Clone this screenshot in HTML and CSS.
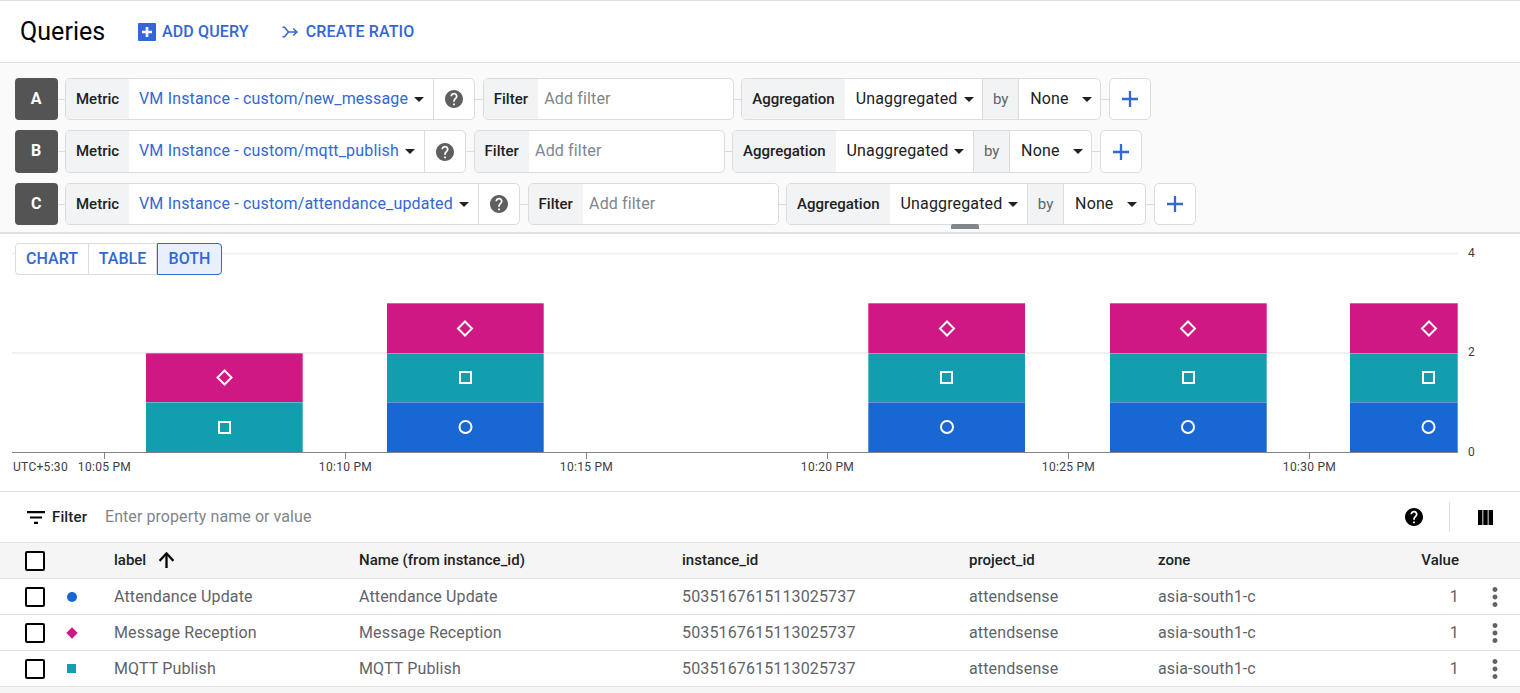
FILE: index.html
```html
<!DOCTYPE html>
<html lang="en">
<head>
<meta charset="utf-8">
<title>Queries</title>
<link rel="stylesheet" href="styles.css">
</head>
<body>
<svg class="defs" width="0" height="0" aria-hidden="true">
  <symbol id="help" viewBox="2 2 20 20"><path d="M12 2C6.48 2 2 6.48 2 12s4.48 10 10 10 10-4.48 10-10S17.52 2 12 2zm1 17h-2v-2h2v2zm2.07-7.75l-.9.92C13.45 12.9 13 13.5 13 15h-2v-.5c0-1.1.45-2.1 1.17-2.83l1.24-1.26c.37-.36.59-.86.59-1.41 0-1.1-.9-2-2-2s-2 .9-2 2H8c0-2.21 1.79-4 4-4s4 1.79 4 4c0 .88-.36 1.68-.93 2.25z"/></symbol>
  <symbol id="plus" viewBox="0 0 18 18"><path d="M7.700 0h2.600v7.700H18v2.600h-7.700V18H7.700v-7.700H0V7.700h7.700z"/></symbol>
  <symbol id="more" viewBox="0 0 24 24"><path d="M12 8c1.1 0 2-.9 2-2s-.9-2-2-2-2 .9-2 2 .9 2 2 2zm0 2c-1.1 0-2 .9-2 2s.9 2 2 2 2-.9 2-2-.9-2-2-2zm0 6c-1.1 0-2 .9-2 2s.9 2 2 2 2-.9 2-2-.9-2-2-2z"/></symbol>
</svg>

<header class="head">
  <h1 class="title">Queries</h1>
  <a class="action action-add"><svg class="ico-add" viewBox="0 0 18 18"><rect width="18" height="18" rx="1" fill="#3367d6"/><path d="M7.700 4h2.600v3.700H14v2.600h-3.700V14H7.700v-3.700H4V7.700h3.700z" fill="#fff"/></svg>ADD QUERY</a>
  <a class="action action-ratio"><svg class="ico-ratio" viewBox="0 0 16 12"><path d="M0.500 1.200H2.500L6.500 6H15M0.500 10.800H2.500L6.500 6M11.200 2.500L15 6L11.200 9.500" fill="none" stroke="#3367d6" stroke-width="1.500"/></svg>CREATE RATIO</a>
</header>

<section class="queries">
  <div class="qrow">
    <div class="letter">A</div><i class="link"></i>
    <div class="pill">
      <span class="plabel plabel-metric">Metric</span>
      <span class="pvalue pvalue-blue">VM Instance - custom/new_message<b class="caret"></b></span>
      <span class="phelp"><svg class="ico-help"><use href="#help"/></svg></span>
    </div><i class="link"></i>
    <div class="pill pill-filter"><span class="plabel plabel-filter">Filter</span><span class="placeholder">Add filter</span></div><i class="link"></i>
    <div class="pill">
      <span class="plabel plabel-agg">Aggregation</span>
      <span class="pvalue pvalue-agg">Unaggregated<b class="caret"></b></span>
      <span class="plabel plabel-by">by</span>
      <span class="pvalue pvalue-none">None<b class="caret"></b></span>
    </div><i class="link"></i>
    <div class="pill pill-plus"><svg class="ico-plus"><use href="#plus"/></svg></div>
  </div>
  <div class="qrow">
    <div class="letter">B</div><i class="link"></i>
    <div class="pill">
      <span class="plabel plabel-metric">Metric</span>
      <span class="pvalue pvalue-blue">VM Instance - custom/mqtt_publish<b class="caret"></b></span>
      <span class="phelp"><svg class="ico-help"><use href="#help"/></svg></span>
    </div><i class="link"></i>
    <div class="pill pill-filter"><span class="plabel plabel-filter">Filter</span><span class="placeholder">Add filter</span></div><i class="link"></i>
    <div class="pill">
      <span class="plabel plabel-agg">Aggregation</span>
      <span class="pvalue pvalue-agg">Unaggregated<b class="caret"></b></span>
      <span class="plabel plabel-by">by</span>
      <span class="pvalue pvalue-none">None<b class="caret"></b></span>
    </div><i class="link"></i>
    <div class="pill pill-plus"><svg class="ico-plus"><use href="#plus"/></svg></div>
  </div>
  <div class="qrow">
    <div class="letter">C</div><i class="link"></i>
    <div class="pill">
      <span class="plabel plabel-metric">Metric</span>
      <span class="pvalue pvalue-blue">VM Instance - custom/attendance_updated<b class="caret"></b></span>
      <span class="phelp"><svg class="ico-help"><use href="#help"/></svg></span>
    </div><i class="link"></i>
    <div class="pill pill-filter"><span class="plabel plabel-filter">Filter</span><span class="placeholder">Add filter</span></div><i class="link"></i>
    <div class="pill">
      <span class="plabel plabel-agg">Aggregation</span>
      <span class="pvalue pvalue-agg">Unaggregated<b class="caret"></b></span>
      <span class="plabel plabel-by">by</span>
      <span class="pvalue pvalue-none">None<b class="caret"></b></span>
    </div><i class="link"></i>
    <div class="pill pill-plus"><svg class="ico-plus"><use href="#plus"/></svg></div>
  </div>
  <div class="handle"></div>
</section>

<section class="chart">
  <svg class="plot" width="1520" height="257" viewBox="0 234 1520 257">
    <path class="grid" d="M12 253.500H1458M12 353H1458"/>
    <g class="bars">
      <rect class="b-pink" x="146" y="353" width="157" height="49"/><rect class="b-teal" x="146" y="402" width="157" height="50"/>
      <rect class="b-pink" x="387" y="303" width="157" height="50"/><rect class="b-teal" x="387" y="353" width="157" height="49"/><rect class="b-blue" x="387" y="402" width="157" height="50"/>
      <rect class="b-pink" x="868" y="303" width="157" height="50"/><rect class="b-teal" x="868" y="353" width="157" height="49"/><rect class="b-blue" x="868" y="402" width="157" height="50"/>
      <rect class="b-pink" x="1110" y="303" width="157" height="50"/><rect class="b-teal" x="1110" y="353" width="157" height="49"/><rect class="b-blue" x="1110" y="402" width="157" height="50"/>
      <rect class="b-pink" x="1350" y="303" width="108" height="50"/><rect class="b-teal" x="1350" y="353" width="108" height="49"/><rect class="b-blue" x="1350" y="402" width="108" height="50"/>
    </g>
    <path class="edges" d="M146 353.500H303M302.500 353V452M387 303.500H544M543.500 303V452M868 303.500H1025M868.500 303V452M1110 303.500H1267M1266.500 303V452M1350 303.500H1458M1457.500 303V452M146 402.500H303M387 353.500H544M387 402.500H544M868 353.500H1025M868 402.500H1025M1110 353.500H1267M1110 402.500H1267M1350 353.500H1458M1350 402.500H1458"/>
    <g class="marks">
      <path d="M224.500 370.500l7 7-7 7-7-7z"/><rect x="219" y="422" width="11" height="11"/>
      <path d="M465 321.500l7 7-7 7-7-7z"/><rect x="460" y="372" width="11" height="11"/><circle cx="465.500" cy="427" r="6"/>
      <path d="M947 321.500l7 7-7 7-7-7z"/><rect x="941" y="372" width="11" height="11"/><circle cx="947" cy="427" r="6"/>
      <path d="M1188 321.500l7 7-7 7-7-7z"/><rect x="1183" y="372" width="11" height="11"/><circle cx="1188" cy="427" r="6"/>
      <path d="M1429 321.500l7 7-7 7-7-7z"/><rect x="1423" y="372" width="11" height="11"/><circle cx="1428.500" cy="427" r="6"/>
    </g>
    <path class="axis" d="M12 452.500H1458M104.500 453v6M345.500 453v6M586.500 453v6M827.500 453v6M1068.500 453v6M1309.500 453v6"/>
    <g class="xlabels">
      <text x="13" y="471">UTC+5:30</text>
      <text class="mid" x="104.500" y="471">10:05 PM</text>
      <text class="mid" x="345.500" y="471">10:10 PM</text>
      <text class="mid" x="586.500" y="471">10:15 PM</text>
      <text class="mid" x="827.500" y="471">10:20 PM</text>
      <text class="mid" x="1068.500" y="471">10:25 PM</text>
      <text class="mid" x="1309.500" y="471">10:30 PM</text>
    </g>
    <g class="ylabels">
      <text x="1468" y="257">4</text>
      <text x="1468" y="356">2</text>
      <text x="1468" y="456">0</text>
    </g>
  </svg>
  <div class="toggle">
    <span class="tog tog-chart">CHART</span><span class="tog tog-table">TABLE</span><span class="tog tog-both">BOTH</span>
  </div>
</section>

<section class="filterbar">
  <svg class="ico-filter" viewBox="3 6 18 12" preserveAspectRatio="none"><path d="M10 18h4v-2h-4v2zM3 6v2h18V6H3zm3 7h12v-2H6v2z"/></svg>
  <span class="filter-label">Filter</span>
  <span class="filter-input">Enter property name or value</span>
  <svg class="ico-help-black"><use href="#help"/></svg>
  <i class="vsep"></i>
  <svg class="ico-cols" viewBox="4 5 17 13" preserveAspectRatio="none"><path d="M10 18h5V5h-5v13zm-6 0h5V5H4v13zM16 5v13h5V5h-5z"/></svg>
</section>

<section class="table">
  <div class="tr th">
    <span class="cbox"></span><span></span>
    <span class="c-label">label<svg class="ico-arrow" viewBox="4 4 16 16" preserveAspectRatio="none"><path d="M4 12l1.410 1.410L11 7.830V20h2V7.830l5.580 5.590L20 12l-8-8-8 8z"/></svg></span>
    <span>Name (from instance_id)</span><span>instance_id</span><span>project_id</span><span>zone</span><span class="num">Value</span><span></span>
  </div>
  <div class="tr">
    <span class="cbox"></span><span class="mk mk-circle"></span>
    <span>Attendance Update</span><span>Attendance Update</span><span>5035167615113025737</span><span>attendsense</span><span>asia-south1-c</span><span class="num">1</span>
    <svg class="ico-more"><use href="#more"/></svg>
  </div>
  <div class="tr">
    <span class="cbox"></span><span class="mk mk-diamond"></span>
    <span>Message Reception</span><span>Message Reception</span><span>5035167615113025737</span><span>attendsense</span><span>asia-south1-c</span><span class="num">1</span>
    <svg class="ico-more"><use href="#more"/></svg>
  </div>
  <div class="tr">
    <span class="cbox"></span><span class="mk mk-square"></span>
    <span>MQTT Publish</span><span>MQTT Publish</span><span>5035167615113025737</span><span>attendsense</span><span>asia-south1-c</span><span class="num">1</span>
    <svg class="ico-more"><use href="#more"/></svg>
  </div>
</section>
<div class="tail"></div>
</body>
</html>
```
FILE: styles.css
```css
* { box-sizing: border-box; }
html, body { margin: 0; height: 693px; overflow: hidden; background: #fff; }
body { font-family: Roboto, "Liberation Sans", sans-serif; color: #202124; border-top: 1px solid #e0e0e0; letter-spacing: .14px; }
.defs { position: absolute; }

.head { height: 62px; display: flex; align-items: center; padding-left: 20px; border-bottom: 1px solid #e0e0e0; }
.title { margin: 0 33px 0 0; font-size: 25px; font-weight: 400; color: #000; width: 85px; letter-spacing: .05px; }
.action { display: flex; align-items: center; font-size: 16px; font-weight: 500; color: #3367d6; }
.action-add { margin-right: 33px; }
.ico-add { width: 18px; height: 18px; margin-right: 6px; }
.ico-ratio { width: 16px; height: 12px; margin-right: 8px; }

.queries { position: relative; height: 171px; padding: 14.75px 0 0 15px; background: #fafafa; border-bottom: 2px solid #e0e0e0; display: flex; flex-direction: column; gap: 10px; }
.qrow { height: 42.5px; display: flex; align-items: stretch; }
.letter { width: 42.5px; padding-bottom: 2px; background: #545454; color: #fff; border-radius: 4px; font-size: 16px; font-weight: 700; display: flex; align-items: center; justify-content: center; }
.link { width: 7.5px; height: 1px; align-self: center; background: #dadce0; }
.pill { display: flex; align-items: stretch; background: #fff; border: 1px solid #dadce0; border-radius: 5px; overflow: hidden; font-size: 16px; }
.plabel { display: flex; align-items: center; padding-bottom: 1px; background: #f1f3f4; font-size: 15px; font-weight: 500; color: #202124; letter-spacing: 0; }
.plabel-metric { width: 63px; padding-left: 10px; }
.plabel-filter { width: 54px; padding-left: 10px; }
.plabel-agg { width: 103px; padding-left: 10px; }
.plabel-by { width: 37px; padding-left: 0; justify-content: center; font-weight: 400; color: #5f6368; border-left: 1px solid #dadce0; border-right: 1px solid #dadce0; }
.pvalue { display: flex; align-items: center; padding-bottom: 2px; white-space: nowrap; color: #202124; }
.pvalue-blue { padding-left: 10px; padding-right: 9.2px; color: #3367d6; letter-spacing: .17px; }
.pvalue-agg { width: 137px; padding-left: 10.5px; }
.pvalue-none { width: 81px; padding-left: 11px; }
.caret { display: inline-block; margin: 2px 0 0 6px; width: 0; height: 0; border-left: 5px solid transparent; border-right: 5px solid transparent; border-top: 5px solid #202124; }
.pvalue-none .caret { margin-left: 13px; }
.phelp { width: 41px; display: flex; align-items: center; justify-content: center; border-left: 1px solid #dadce0; }
.ico-help { width: 18px; height: 18px; fill: #5f5f5f; }
.pill-filter { width: 251px; }
.placeholder { display: flex; align-items: center; padding: 0 0 2px 6.5px; color: #80868b; }
.pill-plus { width: 42px; align-items: center; justify-content: center; }
.ico-plus { width: 16px; height: 16px; fill: #3367d6; }
.handle { position: absolute; left: 951px; top: 161px; width: 28px; height: 5px; border-radius: 2px 2px 0 0; background: #80868b; }

.chart { position: relative; height: 258px; border-bottom: 1px solid #e0e0e0; }
.plot { display: block; }
.grid { stroke: #f1f1f1; stroke-width: 2; fill: none; }
.b-pink { fill: #d01884; }
.b-teal { fill: #129eaf; }
.b-blue { fill: #1967d2; }
.edges { stroke: #fff; stroke-opacity: .3; stroke-width: 1; fill: none; }
.marks * { fill: none; stroke: #fff; stroke-width: 2; }
.axis { stroke: #80868b; stroke-width: 1; fill: none; }
.xlabels text { font-size: 12px; fill: #3c4043; letter-spacing: .3px; }
.xlabels .mid { text-anchor: middle; }
.ylabels text { font-size: 12px; fill: #3c4043; }
.toggle { position: absolute; left: 15px; top: 9px; height: 32px; display: flex; background: #fff; border: 1px solid #dadce0; border-radius: 4px; font-size: 16px; font-weight: 500; color: #3367d6; letter-spacing: 0; }
.tog { display: flex; align-items: center; justify-content: center; padding-bottom: 1px; border-right: 1px solid #dadce0; }
.tog-chart { width: 73px; }
.tog-table { width: 68px; }
.tog-both { width: 65px; margin: -1px -1px -1px 0; background: #e8f0fe; border: 1px solid #3367d6; border-radius: 0 4px 4px 0; }

.filterbar { height: 51px; display: flex; align-items: center; padding-left: 27px; border-bottom: 1px solid #e0e0e0; }
.ico-filter { width: 18px; height: 13px; margin-right: 7px; }
.filter-label { font-size: 15px; font-weight: 500; color: #202124; width: 53px; }
.filter-input { flex: 1; font-size: 16px; color: #80868b; padding-bottom: 1px; letter-spacing: .07px; }
.ico-help-black { width: 18px; height: 18px; margin-right: 26px; }
.vsep { width: 1px; height: 30px; background: #e0e0e0; margin-right: 28px; }
.ico-cols { width: 15px; height: 15px; margin-right: 27px; }

.tr { height: 36px; display: grid; grid-template-columns: 35px 54px 245px 323px 287px 189px 200px 101px 1fr; align-items: center; border-bottom: 1px solid #e0e0e0; font-size: 16px; color: #5f6368; padding-left: 25px; }
.th { background: #f5f5f5; font-size: 15px; font-weight: 500; color: #202124; letter-spacing: 0; }
.th > span:not(.cbox) { padding-bottom: 2px; }
.c-label { display: flex; align-items: center; }
.ico-arrow { width: 15px; height: 16px; margin-left: 13px; stroke: #000; stroke-width: .4; }
.num { text-align: right; }
.cbox { width: 20px; height: 20px; border: 2px solid #000; border-radius: 2px; background: #fff; }
.mk { width: 10px; height: 10px; margin-left: 7px; }
.mk-circle { border-radius: 50%; background: #1967d2; }
.mk-diamond { background: #d01884; width: 8px; height: 8px; margin-left: 7.5px; transform: rotate(45deg); }
.mk-square { background: #129eaf; width: 9px; height: 9px; }
.ico-more { width: 30px; height: 30px; fill: #5f6368; margin-left: 21px; }
.tail { height: 7px; background: #f5f5f5; }
```
